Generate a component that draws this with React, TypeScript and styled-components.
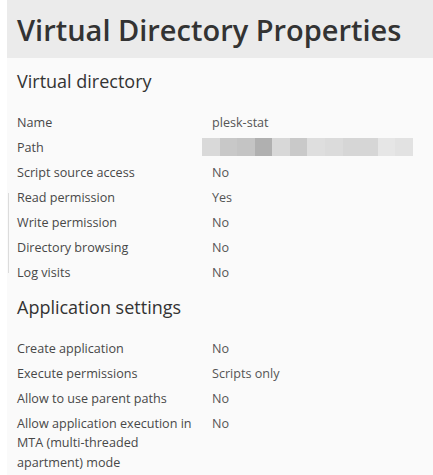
import styled, { createGlobalStyle } from 'styled-components'

const GlobalStyle = createGlobalStyle`
    html, body {
        margin: 0;
        padding: 0;
        background: #ffffff;
    }
    body {
        font-family: 'Open Sans', 'Noto Sans', sans-serif;
        color: #333333;
    }
`

const Page = styled.div`
    position: relative;
    margin-left: 7px;
    width: 426px;
    min-height: 475px;
    background: #fafafa;
`

const Header = styled.div`
    height: 58px;
    background: #ebebeb;
    display: flex;
    align-items: center;
    padding-left: 10px;
    box-sizing: border-box;
`

const Title = styled.h1`
    margin: 0;
    font-size: 29px;
    font-weight: 600;
    color: #333333;
`

const Content = styled.div`
    padding: 0 10px 10px;
`

const Section = styled.section<{ $gap: number }>`
    padding-top: ${(p) => p.$gap}px;
`

const SectionTitle = styled.h2`
    margin: 0 0 17px;
    font-size: 18px;
    font-weight: 400;
    line-height: 24px;
    color: #333333;
`

const Row = styled.div`
    display: grid;
    grid-template-columns: 195px 1fr;
    font-size: 12.6px;
    line-height: 19.5px;
    padding: 2.75px 0;
`

const Label = styled.div`
    color: #484848;
    padding-right: 10px;
`

const Value = styled.div`
    color: #555555;
`

const Blurred = styled.div`
    display: flex;
    margin-left: -10px;
    width: 211px;
    height: 18px;
`

const Cell = styled.div<{ $c: string }>`
    flex: 1;
    background: ${(p) => p.$c};
`

const ScrollMark = styled.div`
    position: absolute;
    left: 1px;
    top: 193px;
    width: 1px;
    height: 80px;
    background: #dcdcdc;
`

const pathCells = [
    '#d9d9d9', '#c8c8c8', '#c4c4c4', '#b0b0b0', '#d8d8d8', '#c9c9c9',
    '#dedede', '#dbdbdb', '#d6d6d6', '#d6d6d6', '#e6e6e6', '#e2e2e2',
]

type Item = { label: string; value?: string; blurred?: boolean }

const directory: Item[] = [
    { label: 'Name', value: 'plesk-stat' },
    { label: 'Path', blurred: true },
    { label: 'Script source access', value: 'No' },
    { label: 'Read permission', value: 'Yes' },
    { label: 'Write permission', value: 'No' },
    { label: 'Directory browsing', value: 'No' },
    { label: 'Log visits', value: 'No' },
]

const application: Item[] = [
    { label: 'Create application', value: 'No' },
    { label: 'Execute permissions', value: 'Scripts only' },
    { label: 'Allow to use parent paths', value: 'No' },
    { label: 'Allow application execution in MTA (multi-threaded apartment) mode', value: 'No' },
]

function Rows({ items }: { items: Item[] }) {
    return (
        <>
            {items.map((it) => (
                <Row key={it.label}>
                    <Label>{it.label}</Label>
                    {it.blurred ? (
                        <Blurred>
                            {pathCells.map((c, i) => (
                                <Cell key={i} $c={c} />
                            ))}
                        </Blurred>
                    ) : (
                        <Value>{it.value}</Value>
                    )}
                </Row>
            ))}
        </>
    )
}

export default function App() {
    return (
        <>
            <GlobalStyle />
            <Page>
                <ScrollMark />
                <Header>
                    <Title>Virtual Directory Properties</Title>
                </Header>
                <Content>
                    <Section $gap={11}>
                        <SectionTitle>Virtual directory</SectionTitle>
                        <Rows items={directory} />
                    </Section>
                    <Section $gap={10}>
                        <SectionTitle>Application settings</SectionTitle>
                        <Rows items={application} />
                    </Section>
                </Content>
            </Page>
        </>
    )
}
